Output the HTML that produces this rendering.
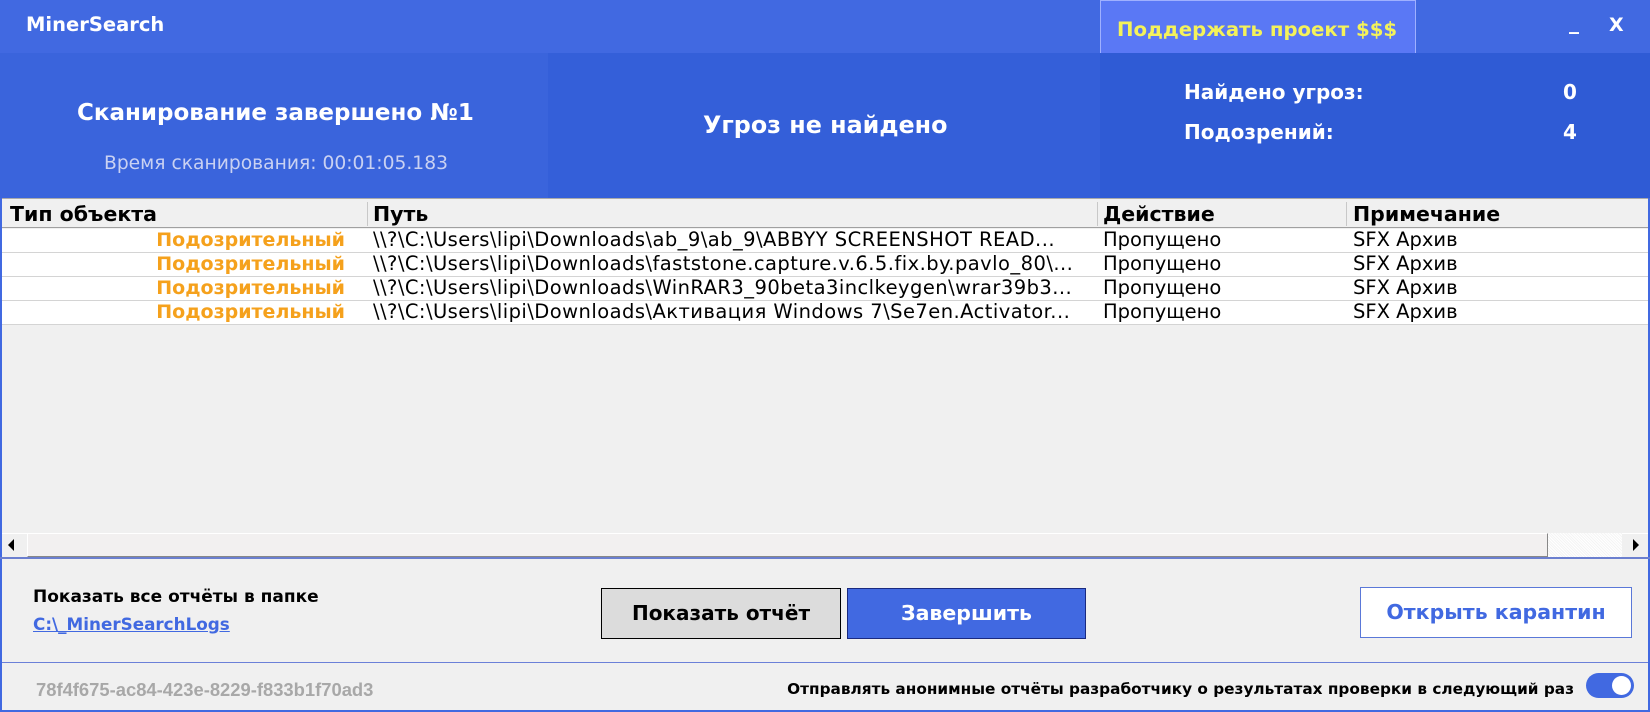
<!DOCTYPE html>
<html><head><meta charset="utf-8"><style>
*{margin:0;padding:0;box-sizing:border-box}
body{width:1650px;height:712px;overflow:hidden;background:#f0f0f0;font-family:"DejaVu Sans","Liberation Sans",sans-serif;position:relative}
.a{position:absolute;white-space:nowrap}
.b{font-weight:bold}
.p{letter-spacing:0.45px}
</style></head><body>
<div class="a" style="left:0;top:0;width:1650px;height:53px;background:#4169e1"></div>
<div class="a b" style="left:26px;top:13px;font-size:19.5px;color:#fff">MinerSearch</div>
<div class="a" style="left:1100px;top:0;width:316px;height:53px;background:#5a78f5;border:1px solid #9fb0ff;border-bottom:none"></div>
<div class="a b" style="left:1117px;top:18px;font-size:19.7px;color:#f4f25a">Поддержать проект $$$</div>
<div class="a b" style="left:1569px;top:10px;font-size:20px;color:#fff">_</div>
<div class="a b" style="left:1609px;top:14px;font-size:19px;color:#fff">X</div>

<div class="a" style="left:0;top:53px;width:548px;height:145px;background:#3a64dc"></div>
<div class="a" style="left:548px;top:53px;width:552px;height:145px;background:#345fd9"></div>
<div class="a" style="left:1100px;top:53px;width:550px;height:145px;background:#2f5bd5"></div>
<div class="a b" style="left:77px;top:100px;font-size:23px;color:#fff">Сканирование завершено №1</div>
<div class="a" style="left:104px;top:153px;font-size:18.7px;color:#c9d1f2">Время сканирования: 00:01:05.183</div>
<div class="a b" style="left:703px;top:111px;font-size:23.8px;color:#fff">Угроз не найдено</div>
<div class="a b" style="left:1184px;top:80px;font-size:20px;color:#fff">Найдено угроз:</div>
<div class="a b" style="left:1184px;top:120px;font-size:20px;color:#fff">Подозрений:</div>
<div class="a b" style="left:1563px;top:80px;font-size:20px;color:#fff">0</div>
<div class="a b" style="left:1563px;top:120px;font-size:20px;color:#fff">4</div>

<div class="a" style="left:0;top:198px;width:1650px;height:360px;background:#f0f0f0;border-left:2px solid #4169e1;border-right:2px solid #4169e1"></div>
<div class="a" style="left:2px;top:198px;width:1646px;height:30px;background:#f0f0f0;border-top:1px solid #aaa;border-bottom:1px solid #a0a0a0"></div>
<div class="a" style="left:367px;top:202px;width:1px;height:24px;background:#c8c8c8"></div>
<div class="a" style="left:1097px;top:202px;width:1px;height:24px;background:#c8c8c8"></div>
<div class="a" style="left:1346px;top:202px;width:1px;height:24px;background:#c8c8c8"></div>
<div class="a b" style="left:10px;top:202px;font-size:20.5px;color:#000">Тип объекта</div>
<div class="a b" style="left:373px;top:202px;font-size:20.5px;color:#000">Путь</div>
<div class="a b" style="left:1103px;top:202px;font-size:20.5px;color:#000">Действие</div>
<div class="a b" style="left:1353px;top:202px;font-size:20.5px;color:#000">Примечание</div>

<div class="a" style="left:2px;top:229px;width:1646px;height:96px;background:#fff"></div>
<div class="a" style="left:2px;top:252px;width:1646px;height:1px;background:#d4d4d4"></div>
<div class="a" style="left:2px;top:276px;width:1646px;height:1px;background:#d4d4d4"></div>
<div class="a" style="left:2px;top:300px;width:1646px;height:1px;background:#d4d4d4"></div>
<div class="a" style="left:2px;top:324px;width:1646px;height:1px;background:#d4d4d4"></div>

<div style="position:absolute;left:0;top:228px;font-size:19.5px;line-height:24px;width:1650px">
<div style="height:24px;position:relative"><span class="a b" style="right:1305px;color:#f5a11c;font-size:19px">Подозрительный</span><span class="a p" style="left:373px">\\?\C:\Users\lipi\Downloads\ab_9\ab_9\ABBYY SCREENSHOT READ...</span><span class="a" style="left:1103px">Пропущено</span><span class="a" style="left:1353px">SFX Архив</span></div>
<div style="height:24px;position:relative"><span class="a b" style="right:1305px;color:#f5a11c;font-size:19px">Подозрительный</span><span class="a p" style="left:373px">\\?\C:\Users\lipi\Downloads\faststone.capture.v.6.5.fix.by.pavlo_80\...</span><span class="a" style="left:1103px">Пропущено</span><span class="a" style="left:1353px">SFX Архив</span></div>
<div style="height:24px;position:relative"><span class="a b" style="right:1305px;color:#f5a11c;font-size:19px">Подозрительный</span><span class="a p" style="left:373px">\\?\C:\Users\lipi\Downloads\WinRAR3_90beta3inclkeygen\wrar39b3...</span><span class="a" style="left:1103px">Пропущено</span><span class="a" style="left:1353px">SFX Архив</span></div>
<div style="height:24px;position:relative"><span class="a b" style="right:1305px;color:#f5a11c;font-size:19px">Подозрительный</span><span class="a p" style="left:373px">\\?\C:\Users\lipi\Downloads\Активация Windows 7\Se7en.Activator...</span><span class="a" style="left:1103px">Пропущено</span><span class="a" style="left:1353px">SFX Архив</span></div>
</div>

<div class="a" style="left:2px;top:533px;width:1646px;height:24px;background:#f0f0f0;border-top:1px solid #fff"></div>
<div class="a" style="left:27px;top:533px;width:1521px;height:24px;background:#f2f0f0;border:1px solid #fff;border-right-color:#888;border-bottom-color:#888"></div>
<div class="a" style="left:1548px;top:533px;width:74px;height:24px;background:repeating-linear-gradient(45deg,#f4f4f4 0 1px,#fff 1px 2px)"></div>
<div class="a" style="left:8px;top:539px;width:0;height:0;border-top:6px solid transparent;border-bottom:6px solid transparent;border-right:6px solid #000"></div>
<div class="a" style="left:1633px;top:539px;width:0;height:0;border-top:6px solid transparent;border-bottom:6px solid transparent;border-left:6px solid #000"></div>
<div class="a" style="left:0;top:557px;width:1650px;height:2px;background:#6b7fcf"></div>

<div class="a" style="left:0;top:559px;width:1650px;height:153px;border:2px solid #4169e1;border-top:none"></div>
<div class="a b" style="left:33px;top:587px;font-size:17px;color:#000">Показать все отчёты в папке</div>
<div class="a b" style="left:33px;top:614px;font-size:16.8px;color:#4169e1;text-decoration:underline">C:\_MinerSearchLogs</div>
<div class="a b" style="left:601px;top:588px;width:240px;height:51px;background:#dcdcdc;border:1px solid #000;font-size:20px;color:#000;text-align:center;line-height:49px">Показать отчёт</div>
<div class="a b" style="left:847px;top:588px;width:239px;height:51px;background:#4169e1;border:1px solid #1a2a80;font-size:20.5px;color:#fff;text-align:center;line-height:49px">Завершить</div>
<div class="a b" style="left:1360px;top:587px;width:272px;height:51px;background:#fff;border:1px solid #5a78d8;font-size:20.5px;color:#4169e1;text-align:center;line-height:49px">Открыть карантин</div>
<div class="a" style="left:2px;top:662px;width:1646px;height:1px;background:#6b80d8"></div>
<div class="a b" style="left:36px;top:679px;font-size:18.4px;font-family:'Liberation Sans',sans-serif;color:#a8a8a8">78f4f675-ac84-423e-8229-f833b1f70ad3</div>
<div class="a b" style="right:76px;top:680px;font-size:15.3px;color:#000">Отправлять анонимные отчёты разработчику о результатах проверки в следующий раз</div>
<div class="a" style="left:1586px;top:673px;width:48px;height:25px;border-radius:13px;background:#4169e1"></div>
<div class="a" style="left:1612px;top:676px;width:19px;height:19px;border-radius:50%;background:#fff"></div>
</body></html>
